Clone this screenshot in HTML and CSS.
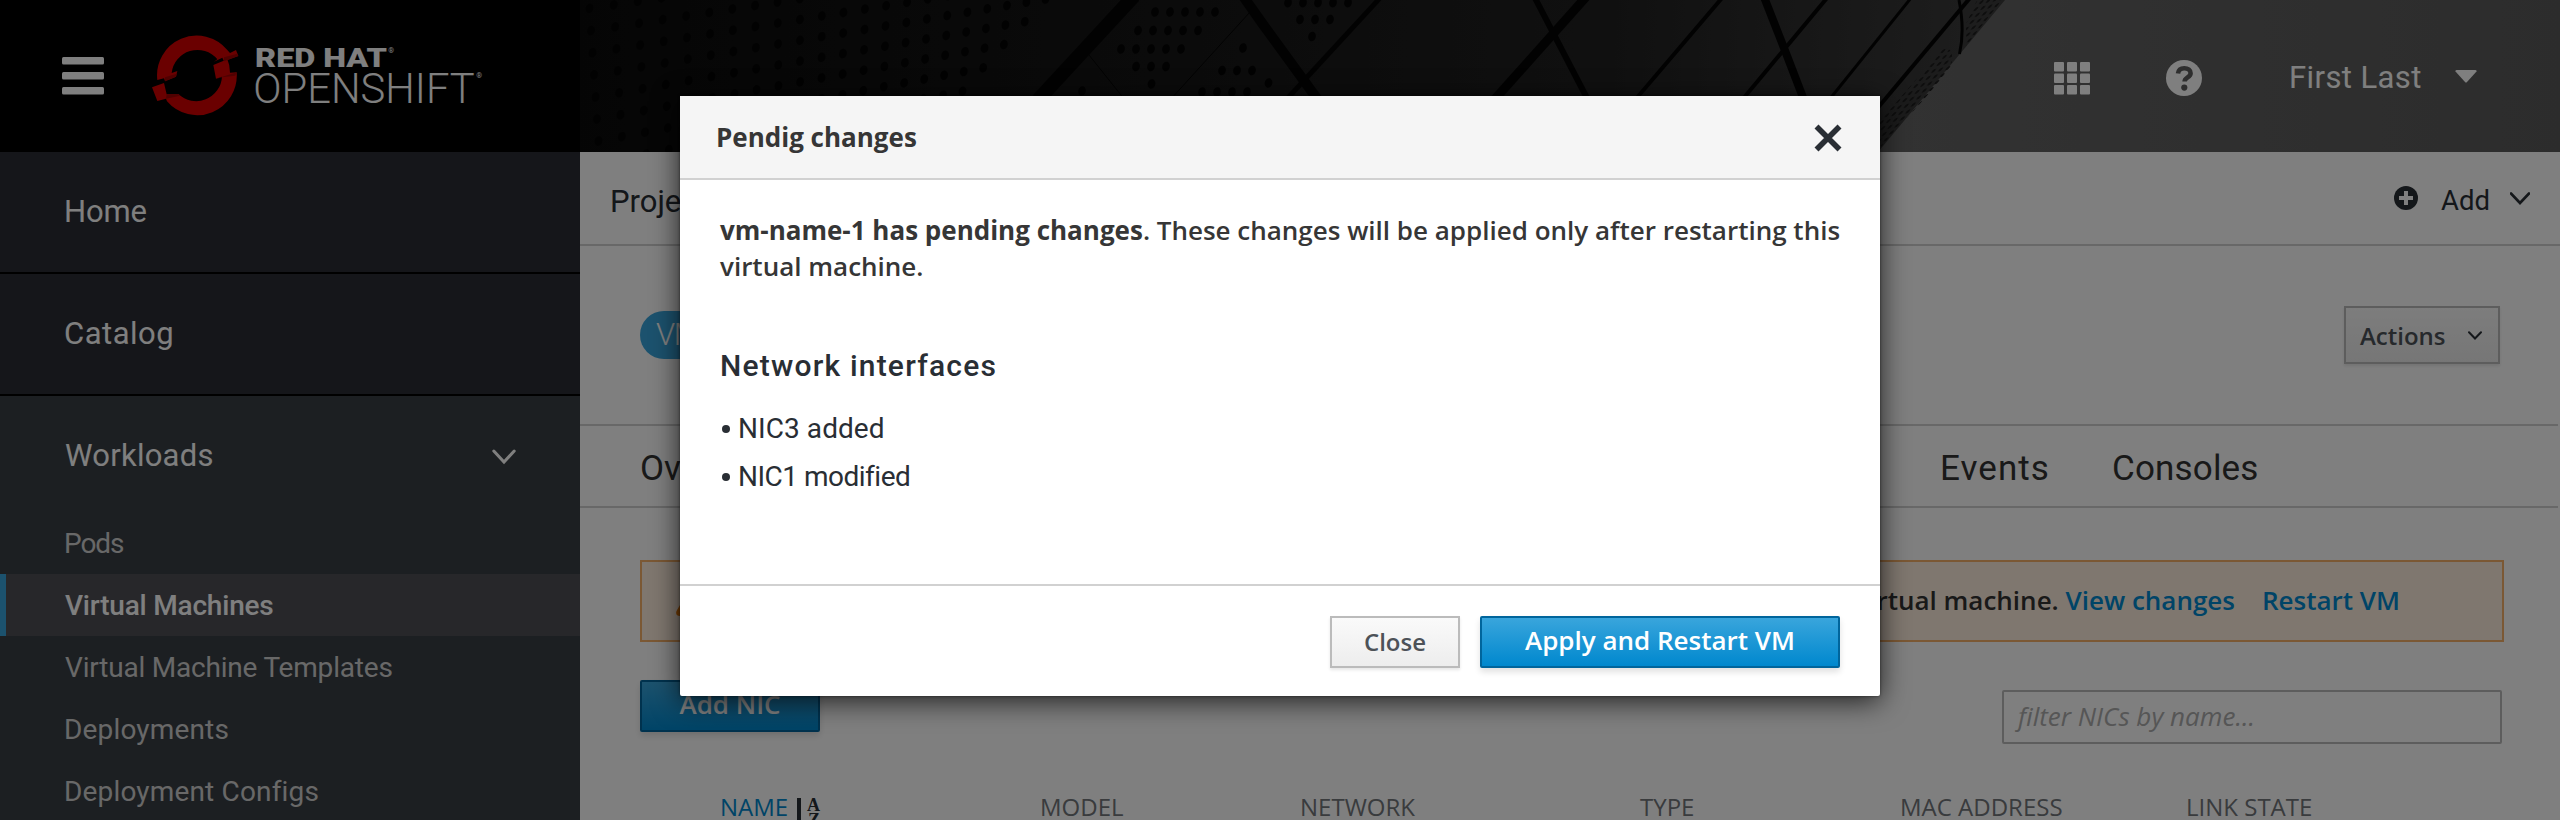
FILE: index.html
```html
<!DOCTYPE html>
<html lang="en">
<head>
<meta charset="utf-8">
<title>Red Hat OpenShift</title>
<link rel="stylesheet" href="styles.css">
</head>
<body>
<div class="app">
  <header class="masthead">
    <div class="brand">
      <svg class="burger" width="42" height="38" viewBox="0 0 42 38"><rect width="42" height="7.4" y="0" rx="1.5"/><rect width="42" height="7.4" y="15" rx="1.5"/><rect width="42" height="7.4" y="30" rx="1.5"/></svg>
      <svg class="logo" width="340" height="90" viewBox="30 15 1020 270">
        <path fill="#d40000" d="M52 165A119 119 0 0 1 262 75L270 84L288 75L295 93L252 109L247 98L222 110L232 103A77.6 77.6 0 0 0 95 144L112 138L108 155L75 169L72 160Z"/>
        <path fill="#d40000" d="M220 120L262 103Q270 120 270 143L290 142A119 119 0 0 1 81 229L78 221L52 228L36 187L72 174L80 208L115 207A77.6 77.6 0 0 0 246 155L228 161Z"/>
        <path fill="#a00000" d="M252 97L292 86L295 93L252 109ZM75 157L110 146L108 155L75 169ZM228 161L290 142L286 152L247 157ZM78 221L80 208L115 207L121 212Z"/>
        <text class="logo-top" x="345" y="127" textLength="396" lengthAdjust="spacingAndGlyphs">RED HAT</text>
        <text class="logo-reg" x="745" y="83">®</text>
        <text class="logo-bottom" x="340" y="234" textLength="664" lengthAdjust="spacingAndGlyphs">OPENSHIFT</text>
        <text class="logo-reg" x="1009" y="159">®</text>
      </svg>
    </div>
    <div class="banner">
      <svg class="banner-art" width="1980" height="152" viewBox="580 0 1980 152">
        <defs>
          <linearGradient id="wall" gradientUnits="userSpaceOnUse" x1="580" y1="0" x2="1960" y2="60">
            <stop offset="0" stop-color="#0b0b0b"/><stop offset=".45" stop-color="#171717"/><stop offset=".75" stop-color="#212121"/><stop offset="1" stop-color="#3a3a3a"/>
          </linearGradient>
          <linearGradient id="sky" gradientUnits="userSpaceOnUse" x1="1900" y1="0" x2="2560" y2="0">
            <stop offset="0" stop-color="#646464"/><stop offset="1" stop-color="#595959"/>
          </linearGradient>
          <pattern id="mesh" width="6" height="7" patternUnits="userSpaceOnUse" patternTransform="skewX(-38) skewY(-12)"><ellipse cx="3" cy="3.500" rx="1.400" ry="2.100" fill="#1c1c1c"/></pattern>
        </defs>
        <rect x="580" width="1980" height="152" fill="url(#sky)"/>
        <path fill="url(#wall)" d="M580 0H2005L1878 152H580Z"/>
        <g id="holes" fill="#050505"></g>
        <path fill="url(#mesh)" d="M1977 0H2002L1966 46L1966 24ZM1945 46L1952 52L1952 68L1881 147L1874 128Z"/>
        <g fill="none" stroke="#050505">
          <path stroke-width="14" d="M1134 -4L1038 100"/>
          <path stroke-width="10" d="M1243 -4L1262 23L1318 100"/>
          <path stroke-width="5" d="M1380 -2L1286 100"/>
          <path stroke-width="1" d="M1250 12L1170 100M1089 55L1125 100"/>
          <path stroke-width="6" d="M1535 -2L1588 100"/>
          <path stroke-width="9" d="M1586 -3L1494 100"/>
          <path stroke-width="4" d="M1722 -2L1635 100M1827 -2L1742 100"/>
          <path stroke-width="8" d="M1764 -3L1784 48L1804 100"/>
          <path stroke-width="3" d="M1911 -2L1829 100"/>
          <path stroke-width="4" d="M1970 -2L1876 110"/>
          <path stroke-width="3" d="M1959 0Q1965 30 1959.500 54"/>
        </g>
      </svg>
      <div class="tools">
        <svg class="apps" width="36" height="33" viewBox="0 0 36 33"><g><rect width="10" height="9.500" rx="1"/><rect x="13" width="10" height="9.500" rx="1"/><rect x="26" width="10" height="9.500" rx="1"/><rect y="11.500" width="10" height="9.500" rx="1"/><rect x="13" y="11.500" width="10" height="9.500" rx="1"/><rect x="26" y="11.500" width="10" height="9.500" rx="1"/><rect y="23" width="10" height="9.500" rx="1"/><rect x="13" y="23" width="10" height="9.500" rx="1"/><rect x="26" y="23" width="10" height="9.500" rx="1"/></g></svg>
        <svg class="help" width="36" height="36" viewBox="0 0 36 36"><circle cx="18" cy="18" r="18"/><path d="M12 13.500C12.500 9.500 15 8.200 18.300 8.200C22 8.200 24.600 10.300 24.600 13.200C24.600 17.500 18.600 17.200 18.600 21.500" fill="none" stroke="#5c5c5c" stroke-width="4.600"/><circle cx="18.300" cy="27.600" r="3.100" fill="#5c5c5c"/></svg>
        <span class="user">First Last</span>
        <svg class="caret" width="22" height="13" viewBox="0 0 22 13"><path d="M1.500 0H20.500Q22 0 21.500 1.500L12 12Q11 13 10 12L.5 1.500Q0 0 1.500 0Z"/></svg>
      </div>
    </div>
  </header>

  <div class="columns">
    <nav class="sidebar">
      <div class="nav-item ls-home">Home</div>
      <div class="nav-item ls-catalog">Catalog</div>
      <div class="nav-item nav-open"><span class="ls-workloads">Workloads</span>
        <svg class="nav-chev" width="24" height="16" viewBox="0 0 24 16"><path d="M1.800 2L12 13L22.200 2" fill="none" stroke="#fff" stroke-width="3" stroke-linecap="round"/></svg>
      </div>
      <div class="sub ls-pods">Pods</div>
      <div class="sub sub-active">Virtual Machines</div>
      <div class="sub ls-vmt">Virtual Machine Templates</div>
      <div class="sub ls-dep">Deployments</div>
      <div class="sub ls-dep">Deployment Configs</div>
    </nav>

    <main class="content">
      <div class="project-bar">
        <span class="project">Project</span>
        <div class="add">
          <svg width="24" height="24" viewBox="0 0 24 24"><circle cx="12" cy="12" r="12" fill="#292e34"/><path d="M12 5V19M5 12H19" stroke="#fff" stroke-width="4"/></svg>
          <span class="add-label">Add</span>
          <svg class="add-chev" width="20" height="13" viewBox="0 0 20 13"><path d="M1 1.500L10 11L19 1.500" fill="none" stroke="#292e34" stroke-width="2.600" stroke-linecap="round"/></svg>
        </div>
      </div>
      <div class="title-row">
        <span class="badge">VM</span>
        <div class="actions">Actions <svg width="14" height="9" viewBox="0 0 14 9"><path d="M1 1.200L7 7.500L13 1.200" fill="none" stroke="#292e34" stroke-width="2" stroke-linecap="round"/></svg></div>
      </div>
      <div class="tabs"><span class="tab-first">Overview</span><span class="tab-events">Events</span><span class="tab-consoles">Consoles</span></div>
      <div class="alert">
        <svg class="warn" width="36" height="32" viewBox="0 0 36 32"><path fill="#ec7a08" d="M18 0Q20 0 21 2L35.500 27Q37 32 32 32H4Q-1 32 .5 27L15 2Q16 0 18 0Z"/></svg>
        <div class="alert-text">restarting this virtual machine. <a class="link">View changes</a><a class="link link-restart">Restart VM</a></div>
      </div>
      <div class="toolbar">
        <div class="btn btn-primary add-nic">Add NIC</div>
        <div class="filter">filter NICs by name...</div>
      </div>
      <div class="thead">
        <div class="th-name">NAME <svg class="sort" width="24" height="28" viewBox="0 0 24 28"><rect x="0" y="0" width="4" height="28" fill="#292e34"/><text x="10" y="12.500" class="sort-letter">A</text><text x="11" y="28" class="sort-letter">Z</text></svg></div>
        <div>MODEL</div><div>NETWORK</div><div>TYPE</div><div>MAC ADDRESS</div><div>LINK STATE</div>
      </div>
    </main>
  </div>

  <div class="backdrop">
    <section class="modal">
      <header class="modal-head">
        <h1 class="modal-title">Pendig changes</h1>
        <svg class="close" width="30" height="28" viewBox="0 0 30 28"><path d="M3.500 2.500L26.500 25.500M26.500 2.500L3.500 25.500" stroke="#292e34" stroke-width="5.600"/></svg>
      </header>
      <div class="modal-body">
        <p class="message"><b>vm-name-1 has pending changes</b>. These changes will be applied only after restarting this virtual machine.</p>
        <h2 class="subhead">Network interfaces</h2>
        <ul class="changes"><li class="change ls-nic3">NIC3 added</li><li class="change ls-nic1">NIC1 modified</li></ul>
      </div>
      <footer class="modal-foot">
        <div class="btn btn-default">Close</div>
        <div class="btn btn-primary apply">Apply and Restart VM</div>
      </footer>
    </section>
  </div>
</div>
<script src="holes.js"></script>
</body>
</html>
```
FILE: styles.css
```css
* { box-sizing: border-box; }
body { margin: 0; font-family: "Open Sans", sans-serif; color: #333; }
svg { display: block; flex: none; }
.app { position: relative; width: 2560px; height: 820px; overflow: hidden; background: #fff; display: flex; flex-direction: column; }

/* masthead */
.masthead { display: flex; height: 152px; flex: none; }
.brand { width: 580px; background: #000; display: flex; padding: 30px 0 0 62px; }
.burger { fill: #fff; margin-top: 27px; }
.logo { margin-left: 46px; }
.logo text { fill: #fff; font-family: Roboto, sans-serif; }
.logo .logo-top { font-size: 80px; font-weight: 900; }
.logo .logo-bottom { font-size: 126px; font-weight: 300; }
.logo .logo-reg { font-size: 22px; }
.banner { position: relative; width: 1980px; }
.tools { position: absolute; inset: 0; display: flex; align-items: center; padding-left: 1474px; padding-top: 4px; }
.apps, .help, .caret { fill: #fff; }
.help { margin-left: 76px; }
.user { margin-left: 87px; width: 134px; font: 400 31px/40px Roboto, sans-serif; letter-spacing: .4px; color: #fff; white-space: nowrap; }
.caret { margin-left: 32px; margin-top: -4px; }

/* sidebar */
.columns { display: flex; height: 668px; flex: none; }
.sidebar { width: 580px; background: #393f44; font-family: Roboto, sans-serif; overflow: hidden; }
.nav-item { height: 122px; line-height: 120px; padding-left: 64px; font-size: 31px; color: #fff; background: #2a2c34; border-bottom: 2px solid #000; }
.nav-open { height: 116px; line-height: 118px; background: none; border: 0; display: flex; align-items: center; justify-content: space-between; padding-right: 64px; padding-left: 65px; padding-top: 4px; }
.nav-chev { margin-top: 2px; }
.sub { height: 62px; line-height: 63px; padding-left: 64px; font-size: 28px; color: #d1d1d1; letter-spacing: -.2px; }
.sub-active { background: #4e4e55; border-left: 6px solid #39a5dc; padding-left: 59px; color: #fff; font-weight: 500; }
.ls-home { letter-spacing: -.19px; }
.ls-catalog { letter-spacing: .49px; }
.ls-workloads { letter-spacing: .24px; }
.ls-pods { letter-spacing: -1.1px; }
.ls-vmt { padding-left: 65px; }
.ls-dep { letter-spacing: .16px; }

/* content */
.content { width: 1980px; }
.project-bar { height: 94px; border-bottom: 2px solid #d1d1d1; display: flex; justify-content: space-between; align-items: center; padding: 0 30px 0 30px; font-family: Roboto, sans-serif; color: #292e34; }
.project { font-size: 31px; padding-top: 6px; }
.add { display: flex; align-items: center; }
.add-label { font-size: 27.500px; margin-left: 23px; padding-top: 4px; width: 49px; }
.add-chev { margin-left: 20px; }
.title-row { height: 180px; margin-right: 2px; border-bottom: 2px solid #d1d1d1; display: flex; justify-content: space-between; align-items: center; padding: 0 58px 0 60px; }
.badge { width: 84px; height: 48px; line-height: 48px; border-radius: 24px; background: #39a5dc; color: #fff; font-family: Roboto, sans-serif; font-size: 31px; font-weight: 300; padding-left: 16px; letter-spacing: -1.500px; }
.actions { width: 156px; height: 58px; border: 2px solid #bbb; background: linear-gradient(#fafafa, #ededed); box-shadow: 0 2px 3px rgba(3,3,3,.1); font-size: 24px; font-weight: 600; color: #4d5258; display: flex; align-items: center; justify-content: space-between; padding: 0 16px 0 14px; }
.tabs { height: 82px; margin-right: 2px; border-bottom: 2px solid #d1d1d1; display: flex; align-items: center; padding: 6px 0 0 60px; font: 35px/40px Roboto, sans-serif; color: #333; }
.tab-first { width: 1300px; }
.tab-events { width: 172px; letter-spacing: 1.060px; }
.tab-consoles { letter-spacing: .16px; }
.alert { margin: 52px 56px 0 60px; height: 82px; border: 2px solid #f7b068; background: #ffefde; display: flex; align-items: center; justify-content: space-between; padding: 0 102px 0 34px; color: #333; }
.warn { margin-top: -2px; }
.alert-text { font-size: 26px; font-weight: 600; line-height: 36px; margin-top: -2px; white-space: nowrap; }
.link { color: #0088ce; }
.link-restart { margin-left: 27px; }
.toolbar { display: flex; justify-content: space-between; margin: 38px 58px 0 60px; }
.filter { width: 500px; height: 54px; margin-top: 10px; border: 2px solid #bbb; border-radius: 2px; font-size: 26px; line-height: 48px; font-style: italic; color: #acacac; padding-left: 14px; }
.thead { display: grid; grid-template-columns: 320px 260px 340px 260px 286px 300px; padding-left: 140px; margin-top: 43px; font-size: 24px; line-height: 40px; color: #72767b; white-space: nowrap; }
.th-name { display: flex; color: #0088ce; }
.sort { margin: 11px 0 0 9px; }
.sort-letter { font: bold 18px "Liberation Serif", serif; fill: #292e34; }

/* buttons */
.btn { display: flex; align-items: center; justify-content: center; height: 52px; border: 2px solid #bbb; border-radius: 2px; font-weight: 600; white-space: nowrap; }
.btn-default { width: 130px; font-size: 24px; color: #4d5258; background: linear-gradient(#fafafa, #ededed); box-shadow: 0 2px 3px rgba(3,3,3,.1); border-radius: 0; padding-bottom: 1px; }
.btn-primary { font-size: 26px; padding-bottom: 4px; color: #fff; background: linear-gradient(#39a5dc, #0088ce); border-color: #00659c; box-shadow: 0 4px 6px rgba(3,3,3,.12); }
.add-nic { width: 180px; }
.apply { width: 360px; }

/* modal */
.backdrop { position: absolute; inset: 0; background: rgba(0,0,0,.5); display: flex; justify-content: center; align-items: flex-start; padding-top: 96px; }
.modal { width: 1200px; height: 600px; background: #fff; border-radius: 0 0 2px 2px; box-shadow: 0 0 3px rgba(0,0,0,.5), 0 5px 28px rgba(0,0,0,.75); display: flex; flex-direction: column; }
.modal-head { height: 84px; background: #f5f5f5; border-bottom: 2px solid #d1d1d1; display: flex; align-items: center; justify-content: space-between; padding: 0 37px 0 36px; }
.modal-title { margin: -1px 0 0; font-size: 26px; font-weight: 700; color: #363636; }
.close { margin-top: 2px; }
.modal-body { flex: 1; padding: 32px 30px 0 40px; }
.message { margin: 0; font-size: 26px; line-height: 36px; font-weight: 600; color: #363636; }
.message b { font-weight: 700; }
.subhead { margin: 62px 0 0; font: 500 30px/40px Roboto, sans-serif; letter-spacing: 1.200px; color: #292e34; }
.changes { list-style: none; margin: 19px 0 0; padding: 0 0 0 2px; }
.change { display: flex; align-items: center; height: 48px; font: 28px/48px Roboto, sans-serif; color: #292e34; }
.change::before { content: ""; width: 8px; height: 8px; border-radius: 50%; background: #292e34; margin-right: 8px; }
.ls-nic3 { letter-spacing: .07px; }
.ls-nic1 { letter-spacing: -.5px; }
.modal-foot { height: 112px; border-top: 2px solid #d1d1d1; display: flex; justify-content: flex-end; gap: 20px; padding: 30px 40px 0 0; }
```
FILE: holes.js
```js
// Perforations of the facade in the masthead artwork.
const group = document.getElementById('holes');
const hole = (x, y) => {
  const e = document.createElementNS('http://www.w3.org/2000/svg', 'ellipse');
  e.setAttribute('cx', x);
  e.setAttribute('cy', y);
  e.setAttribute('rx', 3.8);
  e.setAttribute('ry', 4.8);
  e.setAttribute('transform', `rotate(15 ${x} ${y})`);
  group.appendChild(e);
};
// Main panel: columns tighten and rows converge to the right.
for (let row = 0; row < 11; row++) {
  for (let col = 0; col < 22 - Math.max(0, row - 3); col++) {
    const x = 589.5 + col * 24.4 - col * col * 0.115 + row * (1.5 - col * 0.16);
    const t = (x - 590) / 450;
    const left = 8.3 + 22.4 * row;
    const right = 19 * (row - 3);
    const y = left + (right - left) * t;
    if (y > -6 && y < 158) hole(x, y);
  }
}
// Panels between the beams, given as [x, y, count].
[[1155, 12, 5], [1138, 30.500, 5], [1121, 49, 5], [1136, 66.500, 3], [1151.500, 84, 1], [1082, 91, 1],
 [1243, 48, 1], [1222, 70.500, 3], [1202, 92, 4], [1288, 2.700, 5], [1300, 19.500, 3], [1312, 36.500, 1], [1268.500, 83, 1]]
  .forEach(([x, y, n]) => { for (let i = 0; i < n; i++) hole(x + i * 15, y); });
```
